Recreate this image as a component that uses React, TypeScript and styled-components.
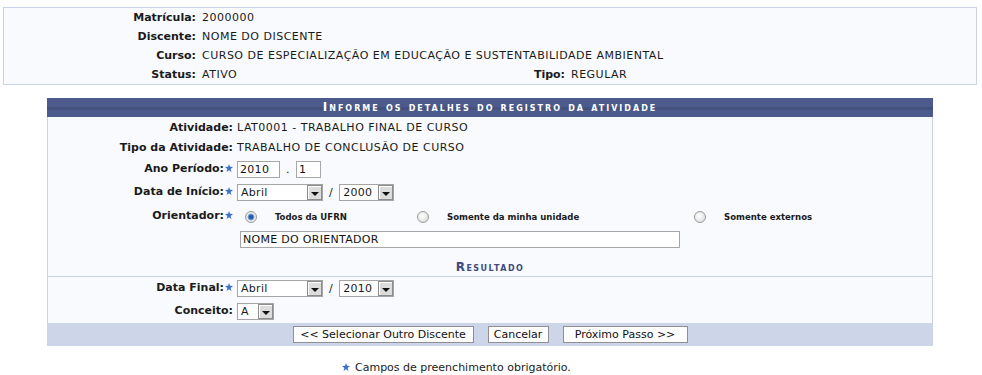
import styled, { createGlobalStyle } from "styled-components";

const GlobalStyle = createGlobalStyle`
  body {
    margin: 0;
    background: #ffffff;
    font-family: "DejaVu Sans", Verdana, sans-serif;
    font-size: 11px;
    color: #1a1a1a;
  }
`;

const Page = styled.div`
  width: 982px;
  padding-top: 7px;
`;

/* dados do discente */
const InfoBox = styled.div`
  width: 972px;
  margin-left: 3px;
  border: 1px solid #c9d3e7;
  background: #f8fafd;
  display: grid;
  grid-template-columns: 192px 325px 32px 1fr;
  column-gap: 6px;
  grid-auto-rows: 19px;
  align-items: center;
`;

const InfoLabel = styled.div`
  font-weight: bold;
  text-align: right;
  white-space: nowrap;
`;

const InfoValue = styled.div<{ $span?: number }>`
  white-space: nowrap;
  letter-spacing: 0.5px;
  grid-column: span ${(p) => p.$span ?? 1};
`;

/* formulário */
const Form = styled.div`
  width: 886px;
  margin: 13px 0 0 47px;
`;

const Caption = styled.div`
  height: 19px;
  line-height: 19px;
  text-align: center;
  color: #ffffff;
  font-size: 12px;
  font-weight: bold;
  font-variant: small-caps;
  letter-spacing: 2px;
  background: linear-gradient(
    to bottom,
    #4c5b8b 0,
    #4c5b8b 9px,
    #43517f 9px,
    #43517f 12px,
    #4c5b8b 12px
  );
`;

const FormBody = styled.div`
  background: #f8fafd;
  border-left: 1px solid #c6d0e6;
  border-right: 1px solid #c6d0e6;
  padding-top: 1px;
`;

const Row = styled.div<{ $controls?: boolean }>`
  display: grid;
  grid-template-columns: 185px 1fr;
  column-gap: 4px;
  align-items: start;
  padding: ${(p) => (p.$controls ? "3px 0" : "2px 0")};
`;

const Label = styled.div<{ $top?: number }>`
  display: flex;
  justify-content: flex-end;
  gap: 1px;
  font-weight: bold;
  line-height: 16px;
  white-space: nowrap;
  padding-top: ${(p) => p.$top ?? 0}px;
`;

const Value = styled.div`
  display: flex;
  align-items: center;
  gap: 6px;
  line-height: 16px;
  letter-spacing: 0.5px;
  white-space: nowrap;
`;

const StarIcon = styled.svg`
  width: 8px;
  height: 8px;
  margin-top: 3px;
  flex: none;
`;

const Star = () => (
  <StarIcon viewBox="0 0 8 8">
    <polygon
      points="4,0 5,2.8 8,3 5.6,4.9 6.5,8 4,6.2 1.5,8 2.4,4.9 0,3 3,2.8"
      fill="#3d6fcf"
    />
  </StarIcon>
);

const TextInput = styled.input<{ $w: number }>`
  box-sizing: border-box;
  width: ${(p) => p.$w}px;
  height: 17px;
  margin: 0;
  padding: 0 2px;
  border: 1px solid #a7a7a7;
  background: #ffffff;
  font-family: "DejaVu Sans", Verdana, sans-serif;
  font-size: 11px;
  letter-spacing: 0.3px;
  color: #111;
  outline: none;
`;

const SelectBox = styled.div<{ $w: number }>`
  box-sizing: border-box;
  width: ${(p) => p.$w}px;
  height: 17px;
  display: flex;
  align-items: center;
  justify-content: space-between;
  border: 1px solid #a5a5a5;
  background: #ffffff;
  padding-left: 3px;
  letter-spacing: 0.3px;
`;

const SelectArrow = styled.span`
  box-sizing: border-box;
  width: 15px;
  height: 15px;
  display: flex;
  align-items: center;
  justify-content: center;
  border: 1px solid #8c8c8c;
  box-shadow: inset 1px 1px 0 #ffffff;
  background: #dcdcdc;

  &::after {
    content: "";
    border-left: 4px solid transparent;
    border-right: 4px solid transparent;
    border-top: 4px solid #111;
    margin-top: 2px;
  }
`;

const Select = ({ value, width }: { value: string; width: number }) => (
  <SelectBox $w={width}>
    <span>{value}</span>
    <SelectArrow />
  </SelectBox>
);

const Orientador = styled.div`
  padding: 2px 0 2px;
`;

const RadioOptions = styled.div`
  display: grid;
  grid-template-columns: 172px 277px 1fr;
  height: 17px;
  align-items: center;
`;

const Option = styled.div`
  display: flex;
  align-items: center;
  padding-left: 8px;
  gap: 18px;
  font-family: "DejaVu Sans Condensed", "DejaVu Sans", sans-serif;
  font-stretch: condensed;
  font-weight: bold;
  font-size: 9.5px;
`;

const Radio = styled.span<{ $checked?: boolean }>`
  box-sizing: border-box;
  width: 12px;
  height: 12px;
  border-radius: 50%;
  border: 1px solid #9c9c9c;
  background: ${(p) =>
    p.$checked
      ? "radial-gradient(circle, #1d4f9a 0, #2f66b3 2px, #8fb1dd 3.2px, #eeeeee 3.8px, #d4d4d4 100%)"
      : "radial-gradient(circle at 40% 40%, #ffffff 0, #e6e6e6 60%, #cfcfcf 100%)"};
`;

const OrientadorInput = styled(TextInput)`
  margin: 6px 0 0 3px;
`;

const SubTitle = styled.div`
  padding: 7px 0 1px;
  line-height: 16px;
  text-align: center;
  font-size: 12px;
  font-weight: bold;
  font-variant: small-caps;
  letter-spacing: 1.5px;
  color: #3e4a7e;
  border-bottom: 1px solid #c6d0e6;
`;

const Buttons = styled.div`
  height: 23px;
  display: flex;
  align-items: center;
  justify-content: center;
  gap: 14px;
  background: #cdd5e9;
`;

const Button = styled.button<{ $w: number }>`
  box-sizing: border-box;
  width: ${(p) => p.$w}px;
  height: 17px;
  padding: 0;
  border: 1px solid #8f8f8f;
  background: #fdfdfd;
  font-family: "DejaVu Sans", Verdana, sans-serif;
  font-size: 11px;
  color: #111;
`;

const Note = styled.div`
  display: flex;
  align-items: flex-start;
  gap: 5px;
  margin-top: 14px;
  padding-left: 342px;
  line-height: 16px;
`;

export default function App() {
  return (
    <Page>
      <GlobalStyle />
      <InfoBox>
        <InfoLabel>Matrícula:</InfoLabel>
        <InfoValue $span={3}>2000000</InfoValue>
        <InfoLabel>Discente:</InfoLabel>
        <InfoValue $span={3}>NOME DO DISCENTE</InfoValue>
        <InfoLabel>Curso:</InfoLabel>
        <InfoValue $span={3}>
          CURSO DE ESPECIALIZAÇÃO EM EDUCAÇÃO E SUSTENTABILIDADE AMBIENTAL
        </InfoValue>
        <InfoLabel>Status:</InfoLabel>
        <InfoValue>ATIVO</InfoValue>
        <InfoLabel>Tipo:</InfoLabel>
        <InfoValue>REGULAR</InfoValue>
      </InfoBox>

      <Form>
        <Caption>Informe os detalhes do registro da atividade</Caption>
        <FormBody>
          <Row>
            <Label>Atividade:</Label>
            <Value>LAT0001 - TRABALHO FINAL DE CURSO</Value>
          </Row>
          <Row>
            <Label>Tipo da Atividade:</Label>
            <Value>TRABALHO DE CONCLUSÃO DE CURSO</Value>
          </Row>
          <Row $controls>
            <Label>
              Ano Período:
              <Star />
            </Label>
            <Value>
              <TextInput $w={43} value="2010" readOnly />
              <span>.</span>
              <TextInput $w={25} value="1" readOnly />
            </Value>
          </Row>
          <Row $controls>
            <Label>
              Data de Início:
              <Star />
            </Label>
            <Value>
              <Select value="Abril" width={86} />
              <span>/</span>
              <Select value="2000" width={55} />
            </Value>
          </Row>
          <Row>
            <Label $top={2}>
              Orientador:
              <Star />
            </Label>
            <Orientador>
              <RadioOptions>
                <Option>
                  <Radio $checked />
                  Todos da UFRN
                </Option>
                <Option>
                  <Radio />
                  Somente da minha unidade
                </Option>
                <Option>
                  <Radio />
                  Somente externos
                </Option>
              </RadioOptions>
              <OrientadorInput $w={440} value="NOME DO ORIENTADOR" readOnly />
            </Orientador>
          </Row>
          <SubTitle>Resultado</SubTitle>
          <Row $controls>
            <Label>
              Data Final:
              <Star />
            </Label>
            <Value>
              <Select value="Abril" width={86} />
              <span>/</span>
              <Select value="2010" width={55} />
            </Value>
          </Row>
          <Row $controls>
            <Label>Conceito:</Label>
            <Value>
              <Select value="A" width={37} />
            </Value>
          </Row>
        </FormBody>
        <Buttons>
          <Button $w={181}>&lt;&lt; Selecionar Outro Discente</Button>
          <Button $w={61}>Cancelar</Button>
          <Button $w={125}>Próximo Passo &gt;&gt;</Button>
        </Buttons>
      </Form>

      <Note>
        <Star />
        Campos de preenchimento obrigatório.
      </Note>
    </Page>
  );
}
